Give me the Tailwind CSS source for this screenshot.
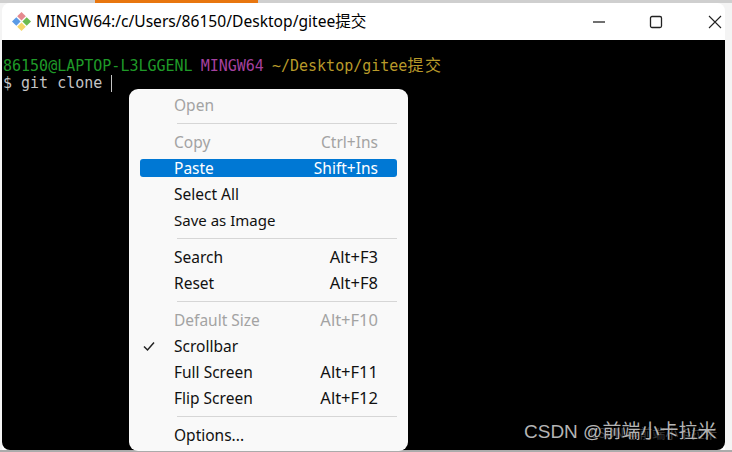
<!DOCTYPE html>
<html lang="en">
<head>
    <meta charset="UTF-8">
    <title>MINGW64</title>
    <script src="https://cdn.jsdelivr.net/npm/@tailwindcss/browser@4"></script>
</head>
<body class="relative w-[732px] h-[452px] overflow-hidden bg-[#f4f4f4] font-['Noto_Sans','Noto_Sans_CJK_SC',sans-serif]">
<!-- strip of the page behind the window -->
<div class="h-[3px] flex bg-[#cfcfcf]">
    <div class="w-[95px]"></div>
    <div class="w-[163px] bg-[#e8760f]"></div>
</div>
<div class="ml-[2px] mr-[7px] h-[447px] flex flex-col rounded-t-lg bg-white">
    <div class="h-[37px] shrink-0 flex items-center">
        <svg class="ml-[9px] w-[21px] h-[21px]" viewBox="0 0 21 21">
            <path d="M10.500 1l4.300 4.300-4.300 4.300-4.300-4.300z" fill="#e58a8f"/>
            <path d="M1 10.500l4.300-4.300 4.300 4.300-4.300 4.300z" fill="#5b9be6"/>
            <path d="M20 10.500l-4.300-4.300-4.300 4.300 4.300 4.300z" fill="#6cbb4f"/>
            <path d="M10.500 20l4.300-4.300-4.300-4.300-4.300 4.300z" fill="#f5d76a"/>
        </svg>
        <span class="ml-[4px] text-[15.600px] leading-none text-black whitespace-nowrap">MINGW64:/c/Users/86150/Desktop/gitee提交</span>
        <div class="ml-auto flex items-center">
            <svg class="w-[14px] h-[14px] mr-[43px]" viewBox="0 0 14 14"><path d="M1 7h12" stroke="#111" stroke-width="1.200"/></svg>
            <svg class="w-[14px] h-[14px] mr-[45px]" viewBox="0 0 14 14"><rect x="1.500" y="1.500" width="11" height="11" rx="1.500" fill="none" stroke="#222" stroke-width="1.300"/></svg>
            <svg class="w-[14px] h-[14px] mr-[3px]" viewBox="0 0 14 14"><path d="M1 1l12 12M13 1L1 13" stroke="#222" stroke-width="1.100"/></svg>
        </div>
    </div>
    <div class="flex-1 bg-black rounded-b-lg pt-[17px] font-['DejaVu_Sans_Mono','Noto_Sans_CJK_SC',monospace] text-[15px] leading-[18px] whitespace-nowrap">
        <div class="pl-[1px] flex whitespace-pre">
            <span class="text-[#1f9a28]">86150@LAPTOP-L3LGGENL </span>
            <span class="text-[#a5409f] -ml-px">MINGW64 </span>
            <span class="text-[#b89a2a] -ml-px">~/Desktop/gitee<span class="text-[16px] tracking-[1.500px]">提交</span></span>
        </div>
        <div class="pl-[1px] -mt-px flex items-center text-[#c4c4c4]">
            <span class="whitespace-pre">$ git clone </span>
            <span class="w-px h-[17px] bg-[#c4c4c4]"></span>
        </div>
    </div>
</div>
<div class="h-[2px] bg-[#ababab]"></div>

<!-- context menu: labels and shortcuts sit on one baseline, line box fixes the row -->
<div class="absolute left-[129px] top-[89px] w-[279px] h-[362px] rounded-[9px] bg-[#f9f9f9] pt-[3px] text-[15.500px] leading-[26px] text-[#111]">
    <div class="h-[26px] flex items-baseline pl-[45px] pr-[30px] text-[#a3a3a3]"><span>Open</span></div>
    <div class="h-[11px] ml-[48px] mr-[11px] pt-[5px]"><div class="h-px bg-[#d6d6d6]"></div></div>
    <div class="h-[26px] flex items-baseline justify-between pl-[45px] pr-[30px] text-[#a3a3a3]"><span>Copy</span><span>Ctrl+Ins</span></div>
    <div class="h-[26px] flex items-center ml-[11px] mr-[11px]">
        <div class="w-full h-[18px] leading-[18px] rounded-[3px] bg-[#0078d4] text-white flex items-baseline justify-between pl-[34px] pr-[19px]"><span>Paste</span><span>Shift+Ins</span></div>
    </div>
    <div class="h-[26px] flex items-baseline pl-[45px] pr-[30px]"><span>Select All</span></div>
    <div class="h-[26px] flex items-baseline pl-[45px] pr-[30px]"><span class="text-[15px]">Save as Image</span></div>
    <div class="h-[11px] ml-[48px] mr-[11px] pt-[5px]"><div class="h-px bg-[#d6d6d6]"></div></div>
    <div class="h-[26px] flex items-baseline justify-between pl-[45px] pr-[30px]"><span>Search</span><span class="text-[16.500px]">Alt+F3</span></div>
    <div class="h-[26px] flex items-baseline justify-between pl-[45px] pr-[30px]"><span>Reset</span><span class="text-[16.500px]">Alt+F8</span></div>
    <div class="h-[11px] ml-[48px] mr-[11px] pt-[5px]"><div class="h-px bg-[#d6d6d6]"></div></div>
    <div class="h-[26px] flex items-baseline justify-between pl-[45px] pr-[30px] text-[#a3a3a3]"><span>Default Size</span><span class="text-[16.500px]">Alt+F10</span></div>
    <div class="relative h-[26px] flex items-baseline pl-[45px] pr-[30px]">
        <svg class="absolute left-[14px] top-[7px] w-[12px] h-[12px]" viewBox="0 0 12 12"><path d="M1 6.500l3.500 3.500L11 2.500" fill="none" stroke="#222" stroke-width="1.500"/></svg>
        <span>Scrollbar</span>
    </div>
    <div class="h-[26px] flex items-baseline justify-between pl-[45px] pr-[30px]"><span>Full Screen</span><span class="text-[16.500px]">Alt+F11</span></div>
    <div class="h-[26px] flex items-baseline justify-between pl-[45px] pr-[30px]"><span>Flip Screen</span><span class="text-[16.500px]">Alt+F12</span></div>
    <div class="h-[11px] ml-[48px] mr-[11px] pt-[5px]"><div class="h-px bg-[#d6d6d6]"></div></div>
    <div class="h-[26px] flex items-baseline pl-[45px] pr-[30px]"><span>Options...</span></div>
</div>

<!-- blog watermark, with the fainter site mark underneath -->
<div class="absolute left-[590px] top-[424px] text-[13px] leading-[18px] text-[#3c3c3c] whitespace-nowrap font-['Noto_Sans_CJK_SC',sans-serif]">CSDN @前端小卡拉米</div>
<div class="absolute left-[524px] top-[421px] text-[19px] leading-[22px] text-[#b4b4b4] whitespace-nowrap font-['Liberation_Sans','Noto_Sans_CJK_SC',sans-serif]">CSDN @前端小卡拉米</div>
</body>
</html>
